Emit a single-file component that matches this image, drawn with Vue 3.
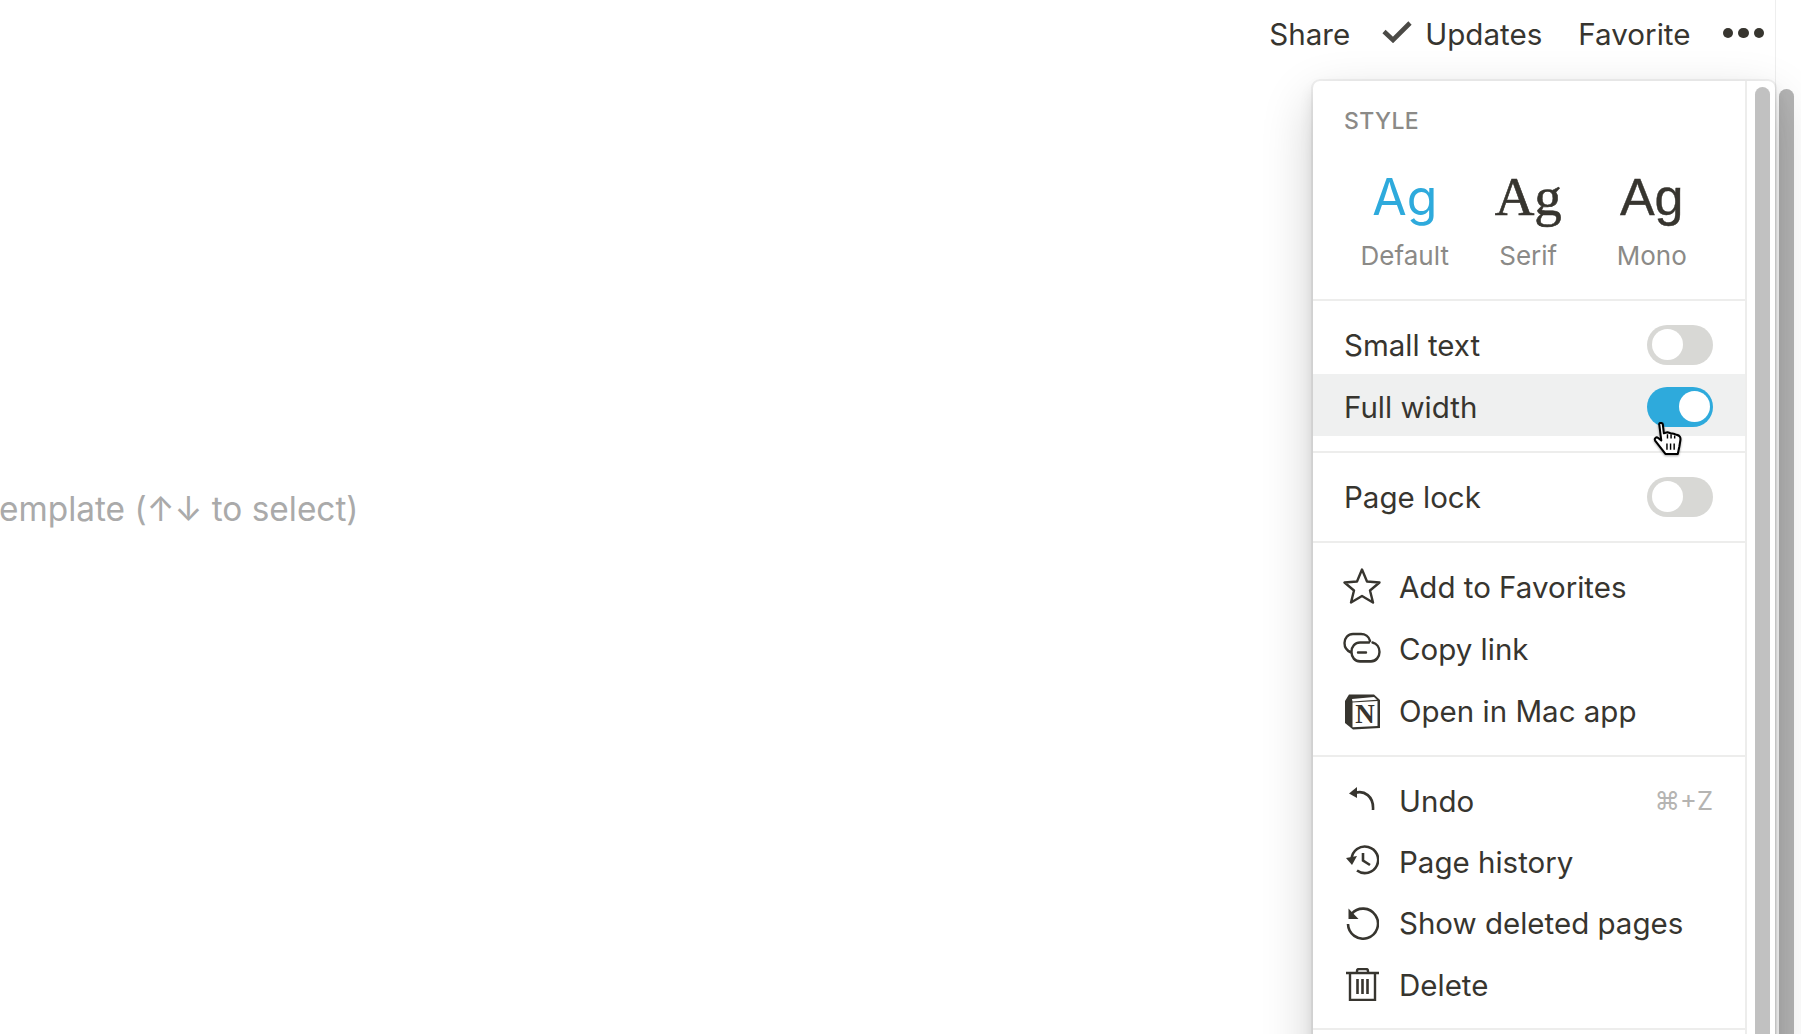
<script setup>
const fonts = [
  { name: 'Default', cls: 'ag-default' },
  { name: 'Serif', cls: 'ag-serif' },
  { name: 'Mono', cls: 'ag-mono' }
]
</script>

<template>
  <div class="page">
    <div class="main">
      <header class="topbar">
        <span>Share</span>
        <span class="updates">
          <svg class="check" width="30" height="22" viewBox="0 0 30 22"><path d="M2 10.5 L11 19 L28 2" fill="none" stroke="#4b4a46" stroke-width="4.6"/></svg>
          Updates
        </span>
        <span class="fav">Favorite</span>
        <span class="dots"><i></i><i></i><i></i></span>
      </header>
      <p class="placeholder">emplate (↑↓ to select)</p>
    </div>
    <div class="page-scroll"><div class="thumb dark"></div></div>

    <aside class="menu">
      <div class="menu-body">
        <section class="style-sec">
          <div class="sec-title">STYLE</div>
          <div class="font-grid">
            <div v-for="f in fonts" :key="f.name" class="font-opt">
              <div class="ag" :class="f.cls">Ag</div>
              <div class="font-name">{{ f.name }}</div>
            </div>
          </div>
        </section>

        <section class="toggles first">
          <div class="row"><span>Small text</span><span class="toggle"><i></i></span></div>
          <div class="row active"><span>Full width</span><span class="toggle on"><i></i></span></div>
        </section>

        <section class="toggles">
          <div class="row"><span>Page lock</span><span class="toggle"><i></i></span></div>
        </section>

        <section class="list">
          <div class="row">
            <span class="ico star"><svg width="38" height="36" viewBox="0 0 38 36"><path d="M19 1.5 L24 13.5 L36.5 14.5 L27 22.5 L30 34.5 L19 28 L8 34.5 L11 22.5 L1.5 14.5 L14 13.5 Z" fill="none" stroke="#37352f" stroke-width="2.4" stroke-linejoin="round"/></svg></span>
            <span>Add to Favorites</span>
          </div>
          <div class="row">
            <span class="ico link"><svg width="38" height="31" viewBox="0 0 38 28" preserveAspectRatio="none"><path d="M27 8 C26 4 22 1.8 18 1.8 H10 C5 1.8 1.5 5.5 1.5 10 C1.5 14 4 17 8 18.5 M29.5 9.5 C34 10.5 36.5 14 36.5 18 C36.5 22.5 33 26.5 28 26.5 H17 C12 26.5 8.5 23 8.5 18 C8.5 13 12 9.5 17 9.5 H26 M15 18.5 H23" fill="none" stroke="#37352f" stroke-width="2.4" stroke-linecap="round"/></svg></span>
            <span>Copy link</span>
          </div>
          <div class="row">
            <span class="ico"><svg width="36" height="37" viewBox="0 0 36 37"><path d="M1 8 L5 1.5 H30 L36 7 V35 L9 36.5 L1 30 Z" fill="#37352f"/><path d="M8 6 L30 4 L33 6.8 L8.5 8.5 Z" fill="#fff"/><path d="M8.5 9.5 L33.5 8 V33 L8.5 34.3 Z" fill="#fff"/><text x="21" y="30" text-anchor="middle" font-family="Liberation Serif" font-weight="700" font-size="27" fill="#37352f">N</text></svg></span>
            <span>Open in Mac app</span>
          </div>
        </section>

        <section class="list last">
          <div class="row">
            <span class="ico up"><svg width="26" height="24" viewBox="0 0 26 24"><path d="M0 6.5 L8 0 L8 11 Z" fill="#37352f"/><path d="M6 6 C15 3 25 9 24 23" fill="none" stroke="#37352f" stroke-width="2.6"/></svg></span>
            <span>Undo</span>
            <span class="shortcut">⌘+Z</span>
          </div>
          <div class="row">
            <span class="ico up"><svg width="33" height="30" viewBox="0 0 33 30"><path d="M5.6 14 A13.3 13.3 0 1 1 11 25.5" fill="none" stroke="#37352f" stroke-width="2.6"/><path d="M0 13 L11 11 L6 20 Z" fill="#37352f"/><path d="M17 8 V15.5 L24 20" fill="none" stroke="#37352f" stroke-width="2.6"/></svg></span>
            <span>Page history</span>
          </div>
          <div class="row">
            <span class="ico"><svg width="33" height="33" viewBox="0 0 33 33"><path d="M5.5 7 A15 15 0 1 1 2 17" fill="none" stroke="#37352f" stroke-width="2.6"/><path d="M2.5 1.5 V12 H12.5 Z" fill="#37352f"/></svg></span>
            <span>Show deleted pages</span>
          </div>
          <div class="row">
            <span class="ico"><svg width="33" height="33" viewBox="0 0 33 33"><path d="M0 5 H33 M11 5 V3 C11 1.5 12 1 13 1 H20 C21 1 22 1.5 22 3 V5 M4 5 V32 H29 V5" fill="none" stroke="#37352f" stroke-width="2.4"/><path d="M11.5 11 V26 M16.5 11 V26 M21.5 11 V26" stroke="#37352f" stroke-width="2.6"/></svg></span>
            <span>Delete</span>
          </div>
        </section>
      </div>
      <div class="menu-scroll"><div class="thumb"></div></div>
    </aside>

    <svg class="cursor" width="33" height="35" viewBox="0 0 32 34">
      <path d="M7 2 C7 0.5 10.5 0.5 10.5 2.5 L11.5 11 L15 10 L18 11 L21 11.5 L24 12.5 C27 13 28 15 27.5 18 L26.5 24 L25 31 H13 L10 27 L3 18 C2 16 4 14 6 15.5 L9 18 Z" fill="#fff" stroke="#000" stroke-width="2" stroke-linejoin="round"/>
      <path d="M14.5 21 V27 M18 21 V27 M21.5 21 V27 M15 12 V16 M18.5 12 V16 M22 13 V16" stroke="#000" stroke-width="1.4"/>
    </svg>
  </div>
</template>

<style scoped>
.page {
  position: relative;
  display: flex;
  height: 1034px;
  overflow: hidden;
  background: #fff;
  font-family: Inter, "Liberation Sans", sans-serif;
  color: #37352f;
}
.main { flex: 1; min-width: 0; }
.topbar {
  display: flex;
  justify-content: flex-end;
  align-items: center;
  gap: 32px;
  height: 68px;
  padding-right: 11px;
  font-size: 29.6px;
}
.updates { display: flex; align-items: center; gap: 13px; }
.fav { margin-left: 4px; }
.check { margin-top: -5px; }
.dots { display: flex; gap: 5px; margin-top: -2px; }
.dots i { width: 10.5px; height: 10.5px; border-radius: 50%; background: #37352f; }
.placeholder {
  margin: 421px 0 0 -1px;
  font-size: 33.4px;
  line-height: 40px;
  color: #aaa;
}
.page-scroll {
  width: 26px;
  padding: 89px 6px 0 3px;
  box-sizing: border-box;
  border-left: 1px solid #eee;
}
.thumb { width: 15px; height: 1100px; border-radius: 8px; background: #c1c1c1; }
.thumb.dark { background: #b4b4b4; }
.menu {
  position: absolute;
  left: 1313px;
  top: 81px;
  width: 462px;
  height: 1100px;
  display: flex;
  background: #fff;
  border-radius: 7px;
  box-shadow: 0 0 0 2px rgba(15,15,15,.05), 0 7px 14px rgba(15,15,15,.1), 0 20px 52px rgba(15,15,15,.2);
}
.menu-body { width: 432px; flex: none; border-right: 2px solid #ededec; }
.menu-scroll { flex: 1; padding: 6px 0 0 8px; }
section { border-bottom: 2px solid #ededec; box-sizing: border-box; }
.style-sec { height: 220px; padding: 27px 0 0 31px; }
.sec-title { font-size: 23px; line-height: 26px; font-weight: 500; color: #8b8a87; letter-spacing: .4px; }
.font-grid { display: grid; grid-template-columns: repeat(3, 123.5px); margin-top: 31px; margin-left: -1px; }
.font-opt { text-align: center; }
.ag { font-size: 50px; line-height: 64px; }
.ag-default { color: #2eaadc; }
.ag-serif { font-family: "Liberation Serif", serif; font-size: 55px; -webkit-text-stroke: .6px #37352f; }
.ag-mono { font-family: "Liberation Sans", sans-serif; font-size: 52px; -webkit-text-stroke: .4px #37352f; }
.font-name { font-size: 26px; line-height: 32px; margin-top: 11px; color: #8b8a87; }
.row {
  display: flex;
  align-items: center;
  height: 62px;
  padding: 0 31px;
  box-sizing: border-box;
  font-size: 29.5px;
}
.row.active { background: #eff0f0; }
.toggles .row { justify-content: space-between; padding: 3px 32px 0 31px; }
.toggles { padding: 11px 0 15px; }
.list { padding: 13px 0 13px; }
.list.last { padding: 13px 0 13px; }
.list.last .row { height: 61.3px; }
.ico { width: 38px; margin: 0 18px 0 -1px; display: flex; justify-content: center; flex: none; }
.ico.up { margin-top: -3px; }
.ico.star { margin-top: -2px; }
.ico.link { margin-top: -3px; }
.ico svg { display: block; }
.shortcut { margin-left: auto; font-size: 25.5px; color: #b5b4b2; padding-right: 1px; }
.toggle {
  display: block;
  width: 66px;
  height: 40px;
  padding: 4.5px 5px;
  box-sizing: border-box;
  border-radius: 20px;
  background: #d8d8d5;
}
.toggle i { display: block; width: 31px; height: 31px; border-radius: 50%; background: #fff; }
.toggle.on { background: #2eaadc; }
.toggle.on i { margin-left: 27px; }
.cursor { position: absolute; left: 1652px; top: 422px; filter: drop-shadow(0 1px 1px rgba(0,0,0,.35)); }
</style>
